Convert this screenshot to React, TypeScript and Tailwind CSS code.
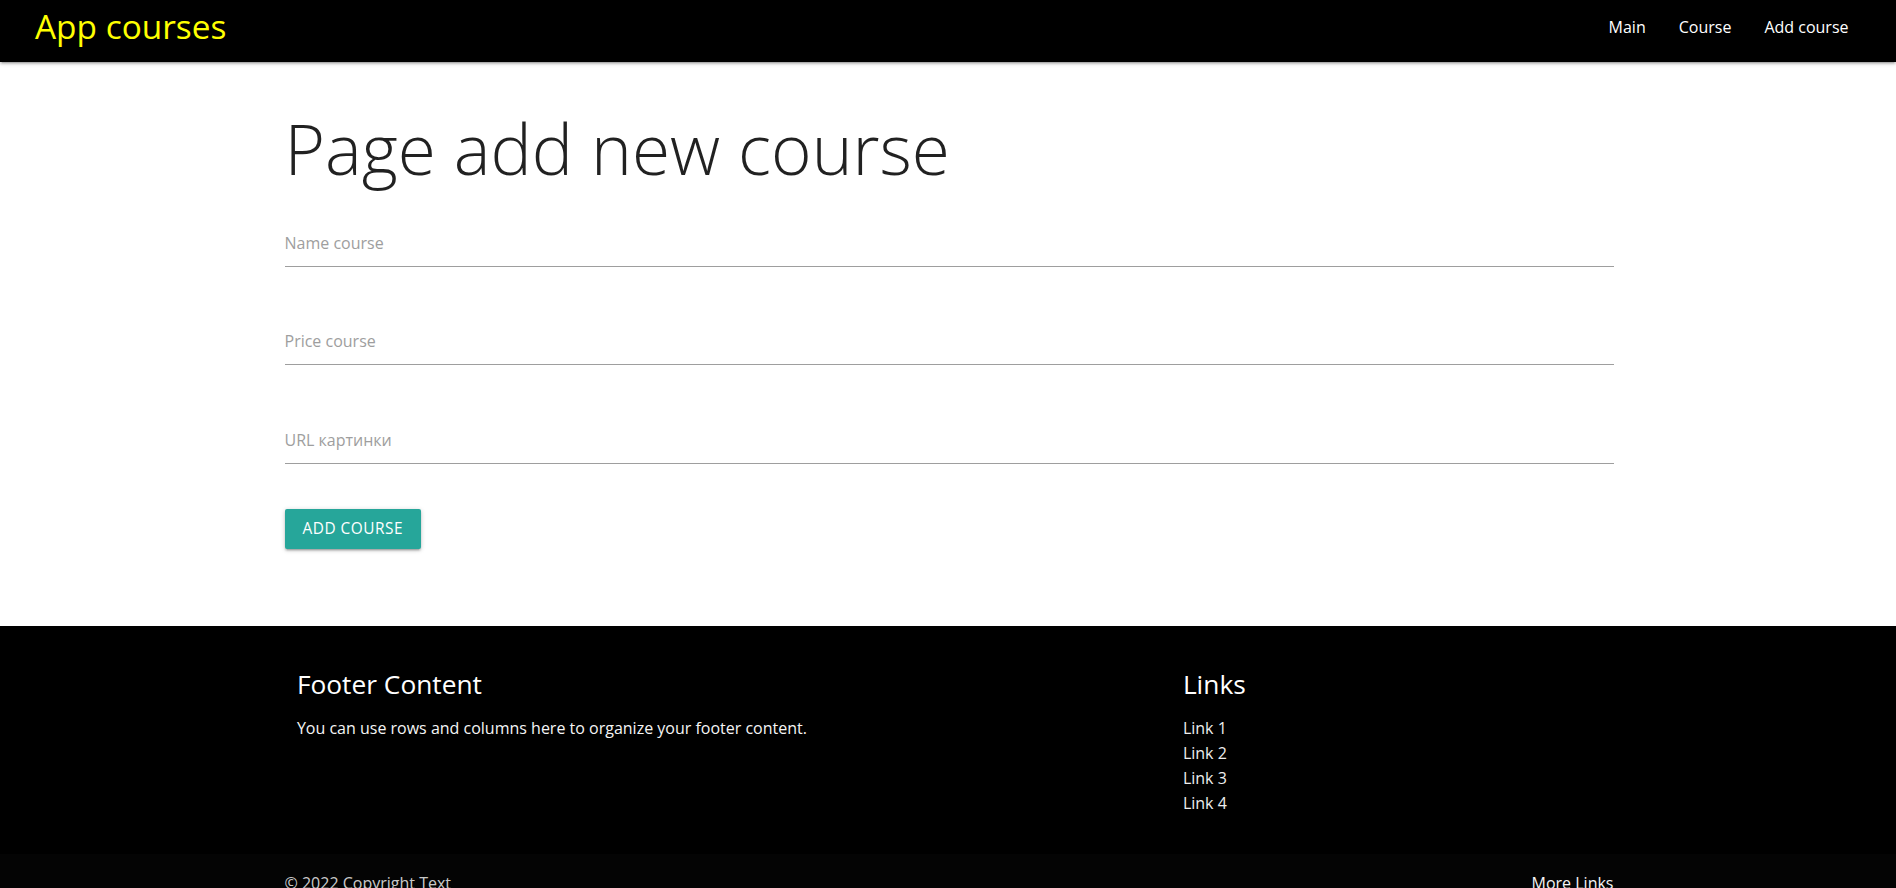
import React from "react";

const font = { fontFamily: '"Open Sans", "Noto Sans", sans-serif' };

export default function App() {
  return (
    <div className="min-h-screen bg-white" style={font}>
      <nav className="relative z-10 h-[62px] bg-black flex items-center justify-between pl-[35px] pr-[31px] pb-[9px] shadow-[0_2px_2px_0_rgba(0,0,0,0.14),0_3px_1px_-2px_rgba(0,0,0,0.12),0_1px_5px_0_rgba(0,0,0,0.2)]">
        <a className="text-[33.4px] leading-none text-[#ffff00]">App courses</a>
        <ul className="flex items-center">
          <li><a className="block px-[16.5px] text-[16px] leading-none text-white">Main</a></li>
          <li><a className="block px-[16.5px] text-[16px] leading-none text-white">Course</a></li>
          <li><a className="block px-[16.5px] text-[16px] leading-none text-white">Add course</a></li>
        </ul>
      </nav>

      <main className="w-[1331px] mx-auto pl-[2px] pb-[77px]">
        <h1 className="mt-[48px] text-[69.3px] leading-[76px] font-[340] text-[rgba(0,0,0,0.87)]">Page add new course</h1>
        <form className="mt-[31.5px] flex flex-col">
          <input
            placeholder="Name course"
            className="h-[49px] pt-[3px] w-full border-b border-[#9e9e9e] bg-transparent text-[16px] outline-none placeholder:text-[#9e9e9e]"
          />
          <input
            placeholder="Price course"
            className="mt-[49px] h-[49px] pt-[3px] w-full border-b border-[#9e9e9e] bg-transparent text-[16px] outline-none placeholder:text-[#9e9e9e]"
          />
          <input
            placeholder="URL картинки"
            className="mt-[50px] h-[49px] pt-[3px] w-full border-b border-[#9e9e9e] bg-transparent text-[16px] outline-none placeholder:text-[#9e9e9e]"
          />
          <div className="mt-[45.5px]">
            <button
              type="button"
              className="h-[40px] px-[18px] rounded-[2px] bg-[#26a69a] text-white text-[15.4px] tracking-[0.5px] uppercase shadow-[0_2px_2px_0_rgba(0,0,0,0.14),0_3px_1px_-2px_rgba(0,0,0,0.12),0_1px_5px_0_rgba(0,0,0,0.2)]"
            >
              Add course
            </button>
          </div>
        </form>
      </main>

      <footer className="bg-black text-white">
        <div className="w-[1331px] mx-auto pl-[2px] pt-[42.5px] h-[228px]">
          <div className="flex">
            <div className="w-1/2 px-[12.4px]">
              <h5 className="text-[26.3px] leading-[30px] text-white">Footer Content</h5>
              <p className="mt-[17px] text-[16px] leading-[25px] text-[#f5f5f5]">
                You can use rows and columns here to organize your footer content.
              </p>
            </div>
            <div className="w-1/3 ml-[16.6667%] px-[12.4px]">
              <h5 className="text-[26.3px] leading-[30px] text-white">Links</h5>
              <ul className="mt-[17px] text-[16px] leading-[25px] text-[#eeeeee]">
                <li><a>Link 1</a></li>
                <li><a>Link 2</a></li>
                <li><a>Link 3</a></li>
                <li><a>Link 4</a></li>
              </ul>
            </div>
          </div>
        </div>
        <div className="bg-[#040404] min-h-[55px] flex items-center pt-[13px] pb-[9px]">
          <div className="w-[1331px] mx-auto pl-[2px] flex justify-between text-[16px] leading-[25px]">
            <span className="text-[rgba(255,255,255,0.8)]">© 2022 Copyright Text</span>
            <a className="text-[#f5f5f5]">More Links</a>
          </div>
        </div>
      </footer>
    </div>
  );
}
